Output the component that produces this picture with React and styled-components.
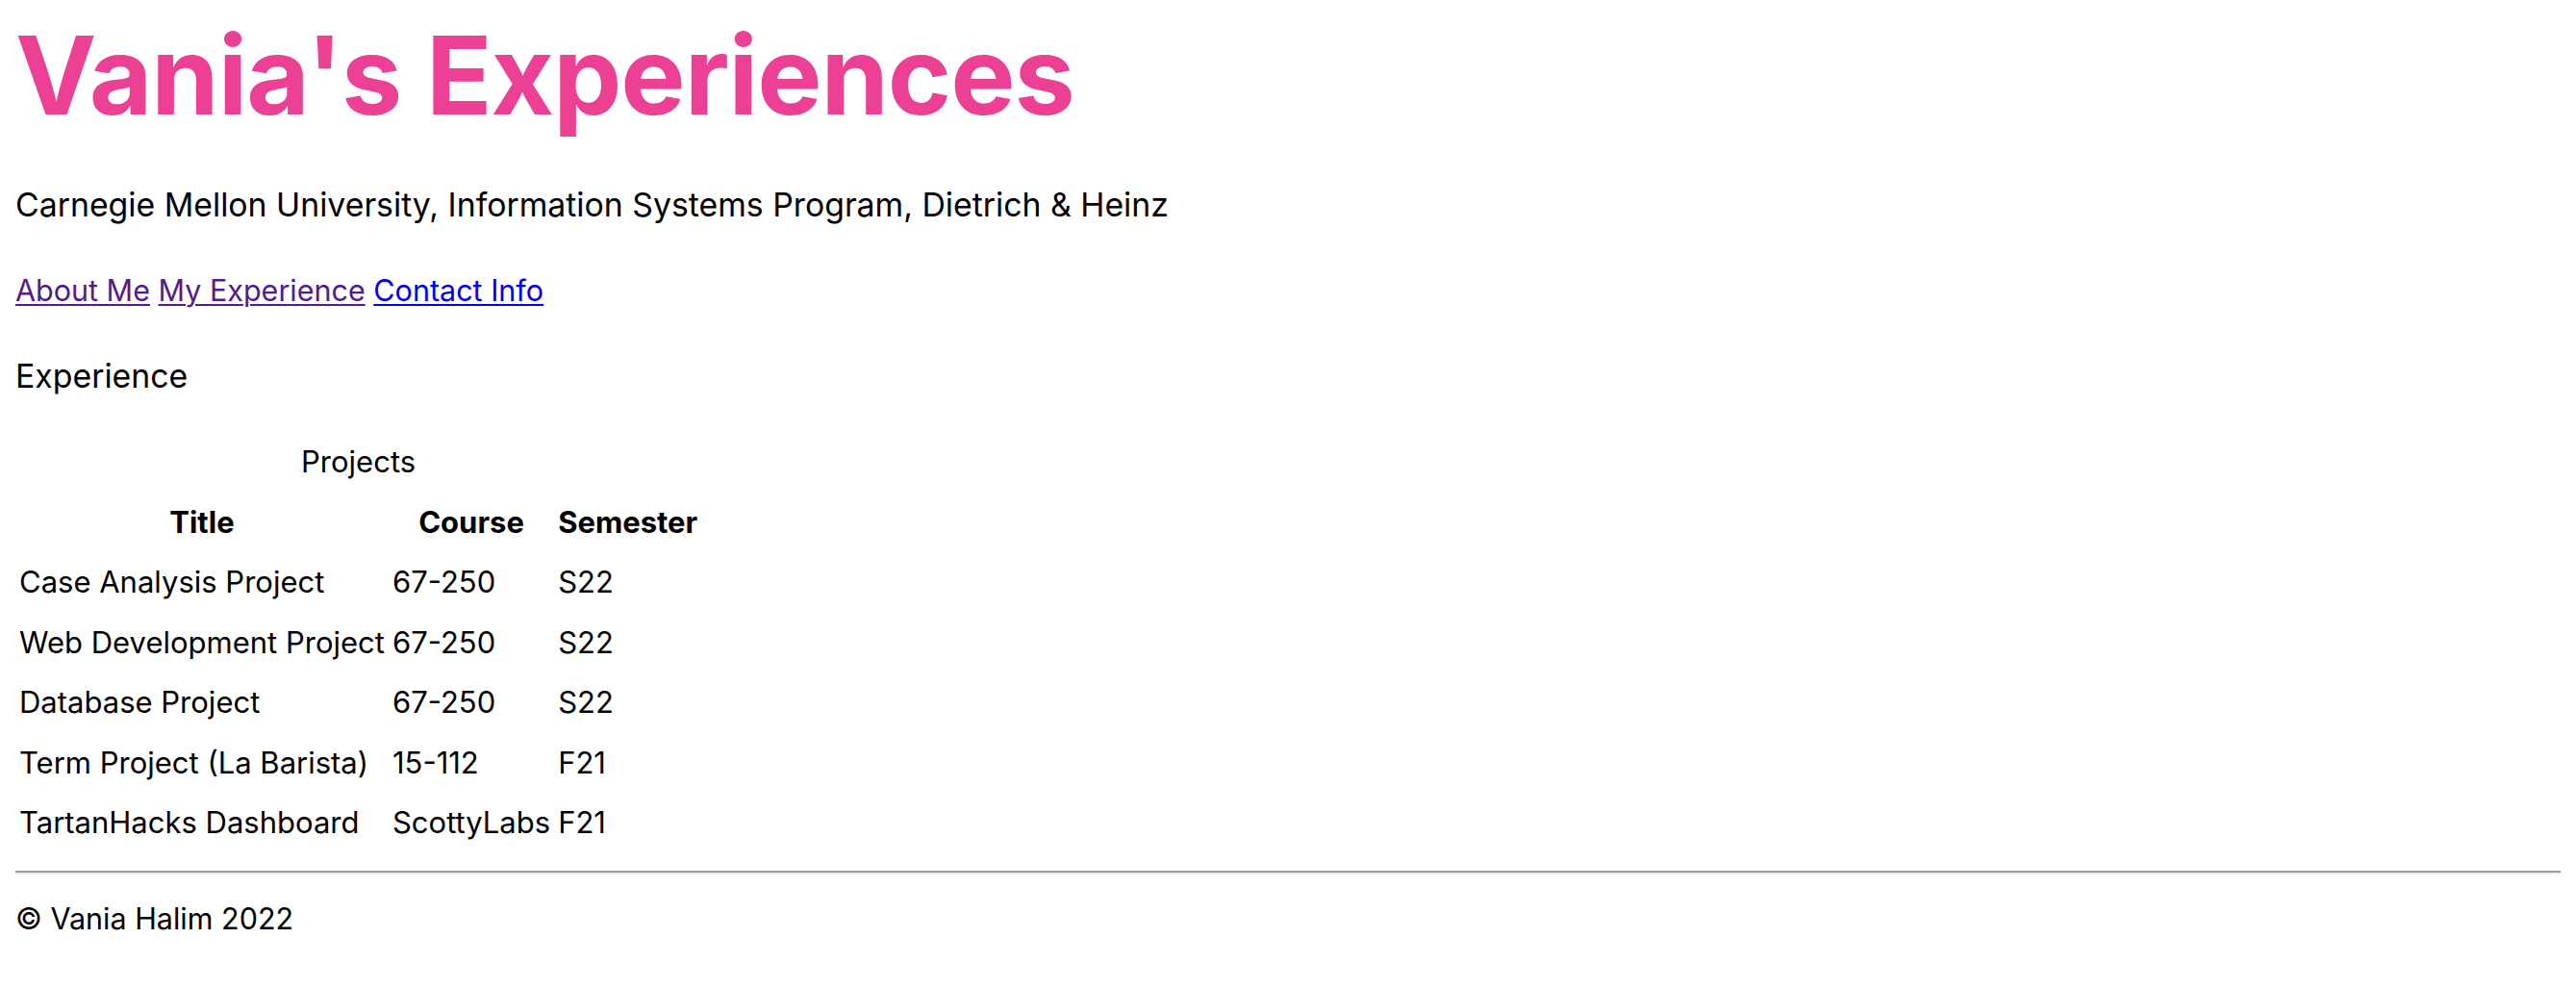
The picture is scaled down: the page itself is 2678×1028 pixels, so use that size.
import React from 'react'
import styled, { createGlobalStyle } from 'styled-components'

const GlobalStyle = createGlobalStyle`
	html, body {
		margin: 0;
		padding: 0;
		background: #fff;
	}
	body {
		font-family: Inter, "Noto Sans", "Liberation Sans", sans-serif;
		color: #000;
		font-size: 30.5px;
	}
`

const Page = styled.div`
	padding: 22px 16px 40px;
`

const Title = styled.h1`
	margin: 0 0 58px;
	font-size: 113px;
	line-height: 1;
	font-weight: 700;
	letter-spacing: -1px;
	color: #ec4094;
`

const Para = styled.p`
	margin: 0 0 49px;
	line-height: 40px;
	font-size: ${props => (props.large ? '33.8px' : 'inherit')};
`

const NavLink = styled.a`
	color: ${props => (props.visited ? '#551a8b' : '#0000ee')};
	text-decoration: underline;
	text-decoration-thickness: 2px;
	text-underline-offset: 3px;
`

const Table = styled.table`
	border-collapse: separate;
	border-spacing: 0;
	font-size: 31px;
`

const Caption = styled.caption`
	line-height: 40px;
	padding-bottom: 12px;
`

const Th = styled.th`
	font-weight: 700;
	text-align: center;
	line-height: 40px;
	padding: 11px 4px;
`

const Td = styled.td`
	text-align: left;
	line-height: 40.5px;
	padding: 11px 4px;
	white-space: nowrap;
`

const Rule = styled.hr`
	margin: 18px 0 26px;
	border: 0;
	border-top: 2px solid #9a9a9a;
	border-bottom: 2px solid #eeeeee;
	height: 0;
`

const Footer = styled.div`
	line-height: 40px;
`

const projects = [
	{ title: 'Case Analysis Project', course: '67-250', semester: 'S22' },
	{ title: 'Web Development Project', course: '67-250', semester: 'S22' },
	{ title: 'Database Project', course: '67-250', semester: 'S22' },
	{ title: 'Term Project (La Barista)', course: '15-112', semester: 'F21' },
	{ title: 'TartanHacks Dashboard', course: 'ScottyLabs', semester: 'F21' },
]

export default function App() {
	return (
		<Page>
			<GlobalStyle />
			<Title>Vania's Experiences</Title>
			<Para large>Carnegie Mellon University, Information Systems Program, Dietrich &amp; Heinz</Para>
			<Para>
				<NavLink href="#about" visited>About Me</NavLink>{' '}
				<NavLink href="#experience" visited>My Experience</NavLink>{' '}
				<NavLink href="#contact">Contact Info</NavLink>
			</Para>
			<Para large>Experience</Para>
			<Table>
				<Caption>Projects</Caption>
				<thead>
					<tr>
						<Th>Title</Th>
						<Th>Course</Th>
						<Th>Semester</Th>
					</tr>
				</thead>
				<tbody>
					{projects.map(p => (
						<tr key={p.title}>
							<Td>{p.title}</Td>
							<Td>{p.course}</Td>
							<Td>{p.semester}</Td>
						</tr>
					))}
				</tbody>
			</Table>
			<Rule />
			<Footer>© Vania Halim 2022</Footer>
		</Page>
	)
}
